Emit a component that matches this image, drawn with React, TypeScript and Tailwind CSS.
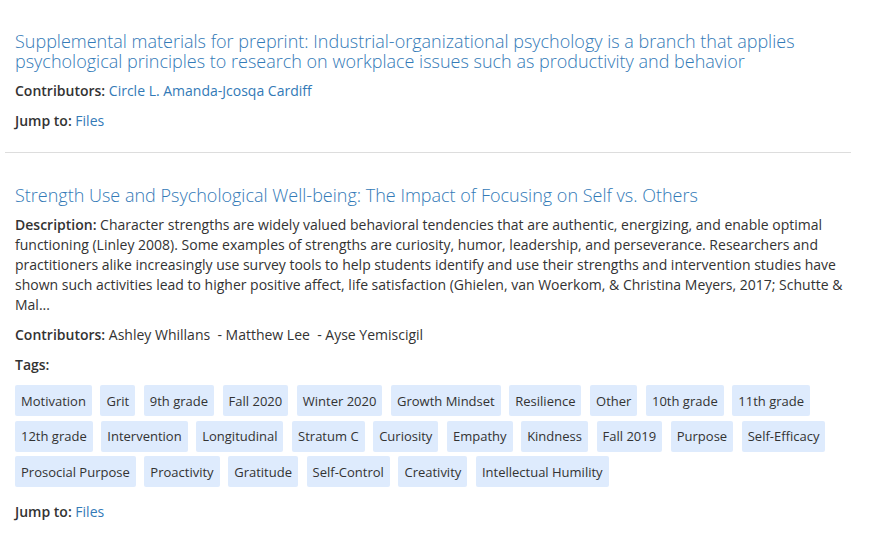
const tags = [
  'Motivation', 'Grit', '9th grade', 'Fall 2020', 'Winter 2020', 'Growth Mindset', 'Resilience', 'Other', '10th grade', '11th grade',
  '12th grade', 'Intervention', 'Longitudinal', 'Stratum C', 'Curiosity', 'Empathy', 'Kindness', 'Fall 2019', 'Purpose', 'Self-Efficacy',
  'Prosocial Purpose', 'Proactivity', 'Gratitude', 'Self-Control', 'Creativity', 'Intellectual Humility',
];

function Label({ children }: { children: React.ReactNode }) {
  return <span className="font-semibold">{children}</span>;
}

export default function App() {
  return (
    <div className="min-h-screen bg-white text-[#333] text-[14px] leading-[20px]" style={{ fontFamily: '"Open Sans", "Liberation Sans", sans-serif' }}>
      <div className="ml-[5px] w-[846px] pt-[31px]">
        <div className="pl-[10px] pb-[21px]">
          <h4 className="text-[18px] leading-[20px] font-light text-[#337ab7]">
            Supplemental materials for preprint: Industrial-organizational psychology is a branch that applies psychological principles to research on workplace issues such as productivity and behavior
          </h4>
          <p className="mt-[10px]">
            <Label>Contributors:</Label> <a className="text-[#337ab7]">Circle L. Amanda-Jcosqa Cardiff</a>
          </p>
          <p className="mt-[10px]">
            <Label>Jump to:</Label> <a className="text-[#337ab7]">Files</a>
          </p>
        </div>
        <div className="border-t border-[#ddd]" />
        <div className="pl-[10px] pt-[32px]">
          <h4 className="text-[18px] leading-[20px] font-light text-[#337ab7]">
            Strength Use and Psychological Well-being: The Impact of Focusing on Self vs. Others
          </h4>
          <p className="mt-[10px]">
            <Label>Description:</Label> Character strengths are widely valued behavioral tendencies that are authentic, energizing, and enable optimal functioning (Linley 2008). Some examples of strengths are curiosity, humor, leadership, and perseverance. Researchers and practitioners alike increasingly use survey tools to help students identify and use their strengths and intervention studies have shown such activities lead to higher positive affect, life satisfaction (Ghielen, van Woerkom, &amp; Christina Meyers, 2017; Schutte &amp; Mal...
          </p>
          <p className="mt-[10px] whitespace-pre">
            <Label>Contributors:</Label> Ashley Whillans  - Matthew Lee  - Ayse Yemiscigil
          </p>
          <p className="mt-[10px]">
            <Label>Tags:</Label>
          </p>
          <div className="mt-[10px] flex flex-wrap gap-x-[8.6px] gap-y-[4.5px]">
            {tags.map((t) => (
              <span key={t} className="rounded-[2px] bg-[#deebfd] px-[6px] py-[5.5px] text-[13px] leading-[20px]">
                {t}
              </span>
            ))}
          </div>
          <p className="mt-[15px]">
            <Label>Jump to:</Label> <a className="text-[#337ab7]">Files</a>
          </p>
        </div>
      </div>
    </div>
  );
}
